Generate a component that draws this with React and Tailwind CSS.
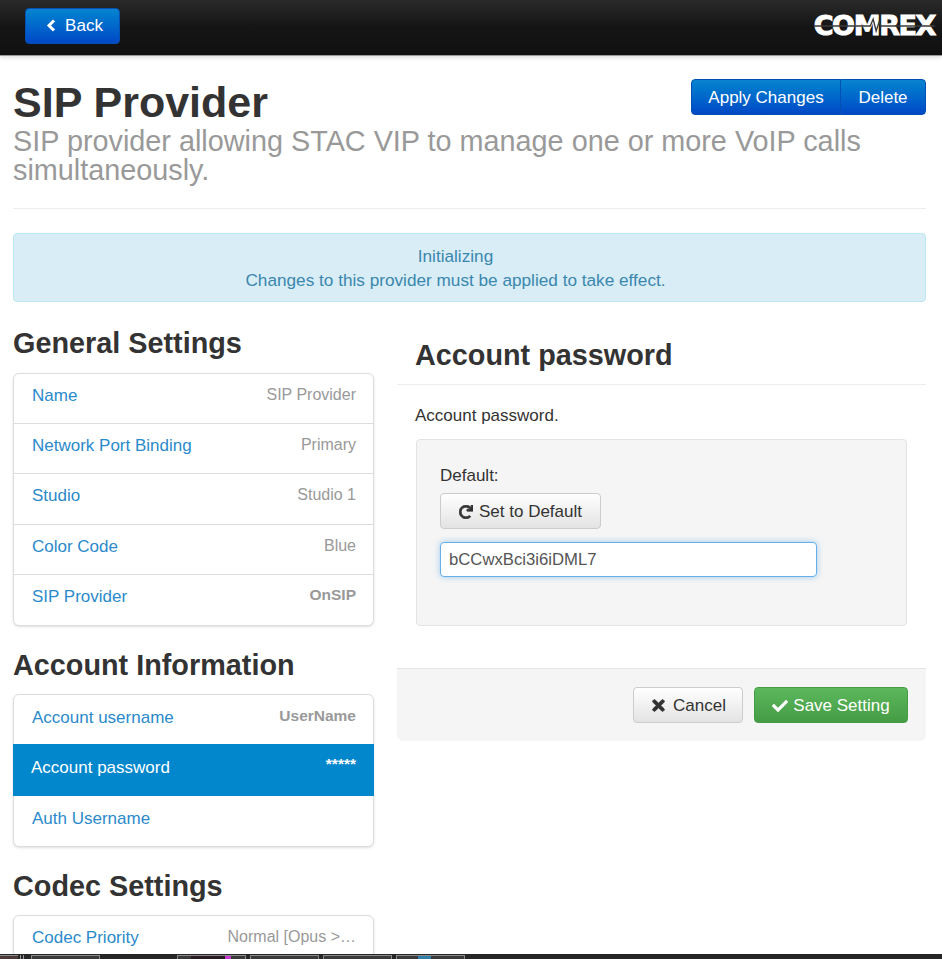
import React from "react";
import { FaRedo, FaTimes, FaCheck } from "react-icons/fa";

const GENERAL = [
  ["Name", "SIP Provider"],
  ["Network Port Binding", "Primary"],
  ["Studio", "Studio 1"],
  ["Color Code", "Blue"],
  ["SIP Provider", "OnSIP", true],
];

const ACCOUNT = [
  ["Account username", "UserName", true],
  ["Account password", "*****", true, true],
  ["Auth Username", ""],
];

const blueBtn =
  "h-9 text-white text-[17px] border border-[#0350b5] bg-gradient-to-b from-[#0a84cf] to-[#0347c6]";
const whiteBtn =
  "flex items-center justify-center h-9 pt-px text-[17px] text-[#333] rounded border border-[#ccc] bg-gradient-to-b from-white to-[#e3e3e3]";
const heading = "text-[28.8px] leading-[32px] font-bold";

const Row = ({ label, value, bold, active, low }) => (
  <div
    className={`flex justify-between pl-[18px] pr-[17px] border-b last:border-b-0 ${
      active
        ? "bg-[#0286cc] border-[#0286cc] -mx-px -mt-px h-[52px] pt-[13px] pr-[18px] text-white"
        : `h-[50.2px] border-[#ddd] ${low ? "pt-[12px]" : "pt-[11px]"}`
    }`}
  >
    <span className={`text-[17px] leading-[22px] ${active ? "text-white" : "text-[#2b8acb]"}`}>{label}</span>
    <span
      className={`${bold ? "text-[15.5px] leading-[18px] font-bold" : "text-[16px] leading-[20px]"} ${
        active ? "text-white -mt-[2px]" : "text-[#999]"
      }`}
    >
      {value}
    </span>
  </div>
);

const Group = ({ rows, low }) => (
  <div className="rounded-md border border-[#ddd] bg-white shadow-sm">
    {rows.map(([label, value, bold, active]) => (
      <Row key={label} label={label} value={value} bold={bold} active={active} low={low} />
    ))}
  </div>
);

const Tab = ({ className, children }) => (
  <div className={`flex w-[69px] h-[4px] bg-[#3a3a3a] border-t border-x border-[#8a8a8a] ${className}`}>{children}</div>
);

export default function App() {
  return (
    <div className="relative h-[959px] overflow-hidden bg-white font-['Liberation_Sans',Arial,sans-serif] text-[#333]">
      {/* Top bar */}
      <header className="flex items-center justify-between h-[56px] pl-[25px] pr-[7px] pb-[4px] bg-gradient-to-b from-[#2a2a2a] via-[#151515] to-[#111] border-b border-[#999] shadow-[0_2px_4px_rgba(0,0,0,0.12)]">
        <button className={`${blueBtn} flex items-center gap-[9px] w-[95px] pl-[4px] justify-center rounded`}>
          <svg width="10" height="13" viewBox="0 0 10 13" fill="none">
            <path d="M8 1.5 3 6.5l5 5" stroke="currentColor" strokeWidth="3" />
          </svg>
          Back
        </button>
        <span className="relative block font-['DejaVu_Sans',sans-serif] font-bold text-[27px] leading-none tracking-[-1.4px] text-white [-webkit-text-stroke:1px_white]">
          COMREX
          <svg className="absolute left-0 top-0 w-full h-full" viewBox="0 0 123 27" fill="none">
            <path d="M0 14H57l3-7 3 12 3-9 2 4H123" stroke="#3a3a3a" strokeWidth="1.4" />
          </svg>
        </span>
      </header>

      <main className="pl-[13px] pr-[16px]">
        {/* Page title */}
        <div className="relative pt-[22px] pb-[23px] border-b border-[#eee]">
          <h1 className="text-[43px] leading-[48px] font-bold mb-px">SIP Provider</h1>
          <p className="text-[28.8px] leading-[29px] text-[#999]">
            SIP provider allowing STAC VIP to manage one or more VoIP calls simultaneously.
          </p>
          <div className="absolute right-0 top-[23px] flex">
            <button className={`${blueBtn} pt-px w-[150px] rounded-l`}>Apply Changes</button>
            <button className={`${blueBtn} pt-px w-[86px] rounded-r -ml-px`}>Delete</button>
          </div>
        </div>

        {/* Status alert */}
        <div className="mt-6 h-[69px] pt-[10px] pr-[28px] rounded border border-[#bce8f1] bg-[#d9edf7] text-center text-[17.2px] leading-[24px] text-[#3a87ad]">
          <div>Initializing</div>
          <div>Changes to this provider must be applied to take effect.</div>
        </div>

        <div className="flex gap-[23px] mt-[25px]">
          {/* Settings list */}
          <div className="w-[361px] shrink-0">
            <h2 className={`${heading} mb-[14px]`}>General Settings</h2>
            <Group rows={GENERAL} />
            <h2 className={`${heading} mt-[23px] mb-[13px]`}>Account Information</h2>
            <Group rows={ACCOUNT} low />
            <h2 className={`${heading} mt-[23px] mb-[13px]`}>Codec Settings</h2>
            <Group rows={[["Codec Priority", "Normal [Opus >…"]]} />
          </div>

          {/* Setting editor */}
          <div className="flex-1 min-w-0">
            <h2 className={`${heading} pl-[18px] pt-[12px] pb-[13px] border-b border-[#eee]`}>Account password</h2>
            <p className="pl-[18px] mt-[20px] text-[17px] leading-[22px]">Account password.</p>
            <div className="ml-[19px] mr-[19px] mt-[12px] h-[187px] pl-[23px] pt-[25px] rounded border border-[#e3e3e3] bg-[#f5f5f5]">
              <div className="text-[17px] leading-[22px]">Default:</div>
              <button className={`${whiteBtn} gap-[6px] w-[161px] mt-[6px]`}>
                <FaRedo className="text-[14px]" stroke="currentColor" strokeWidth={30} />
                Set to Default
              </button>
              <input
                readOnly
                value="bCCwxBci3i6iDML7"
                className="block w-[377px] h-[35px] mt-[13px] px-2 rounded bg-white text-[16.7px] text-[#555] border border-[#66afe9] shadow-[0_0_6px_rgba(102,175,233,0.6)] outline-none"
              />
            </div>
            <div className="flex justify-end gap-[11px] h-[73px] mt-[42px] pt-[18px] pr-[18px] rounded-b-md border-t border-[#e5e5e5] bg-[#f5f5f5]">
              <button className={`${whiteBtn} gap-[6px] w-[110px]`}>
                <FaTimes className="text-[17px]" stroke="currentColor" strokeWidth={30} />
                Cancel
              </button>
              <button className="flex items-center justify-center gap-[5px] w-[154px] h-9 pt-px rounded text-[17px] text-white border border-[#449d44] bg-gradient-to-b from-[#5cb85c] to-[#459c45]">
                <FaCheck className="text-[16px]" />
                Save Setting
              </button>
            </div>
          </div>
        </div>
      </main>

      {/* Desktop taskbar strip */}
      <footer className="absolute left-0 right-0 bottom-0 flex items-end h-[5px] bg-[#262626]">
        <div className="w-[18px] h-[4px] bg-[#4a3a38] border-t border-[#8a8a8a]" />
        <div className="w-[1px] h-[4px] ml-[2px] bg-[#999]" />
        <div className="w-[1px] h-[4px] ml-[2px] bg-[#999]" />
        <Tab className="ml-[7px]" />
        <Tab className="ml-[77px]">
          <div className="w-[34px] ml-[13px] bg-[#2a1a22]" />
          <div className="w-[6px] bg-[#c23ad0]" />
        </Tab>
        <Tab className="ml-[4px]" />
        <Tab className="ml-[4px]" />
        <Tab className="ml-[4px]">
          <div className="w-[13px] ml-[21px] bg-[#2f7fa8]" />
        </Tab>
      </footer>
    </div>
  );
}
